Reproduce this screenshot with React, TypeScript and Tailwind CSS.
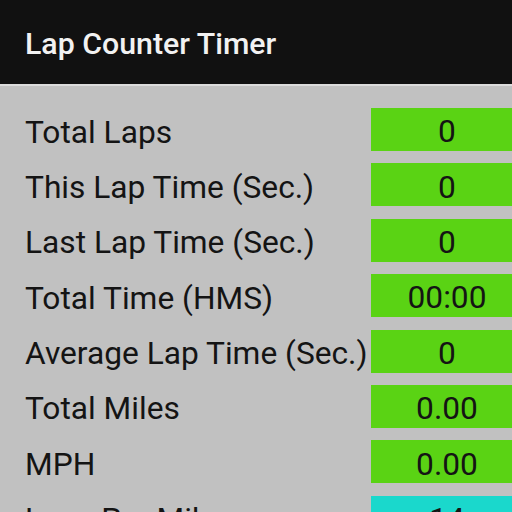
import React from "react";

const rows: { label: string; value: string; color: string }[] = [
  { label: "Total Laps", value: "0", color: "bg-[#5ad314]" },
  { label: "This Lap Time (Sec.)", value: "0", color: "bg-[#5ad314]" },
  { label: "Last Lap Time (Sec.)", value: "0", color: "bg-[#5ad314]" },
  { label: "Total Time (HMS)", value: "00:00", color: "bg-[#5ad314]" },
  { label: "Average Lap Time (Sec.)", value: "0", color: "bg-[#5ad314]" },
  { label: "Total Miles", value: "0.00", color: "bg-[#5ad314]" },
  { label: "MPH", value: "0.00", color: "bg-[#5ad314]" },
  { label: "Laps Per Mile", value: "14", color: "bg-[#1ad8cc]" },
];

export default function App() {
  return (
    <div
      className="w-[512px] h-[512px] overflow-hidden bg-[#c1c1c1] flex flex-col"
      style={{ fontFamily: "Roboto, 'Noto Sans', sans-serif" }}
    >
      <div className="h-[84px] shrink-0 bg-[#111111] flex items-center pl-[25px]">
        <span className="text-[30.3px] font-medium text-[#f2f2f2] mt-[3px]">
          Lap Counter Timer
        </span>
      </div>
      <div className="h-[2px] shrink-0 bg-[#dcdcdc]" />
      <div className="flex flex-col gap-[12.4px] pt-[22px] pl-[25px]">
        {rows.map((r) => (
          <div key={r.label} className="flex items-center h-[43px] shrink-0">
            <div className="w-[346px] shrink-0 text-[31.7px] text-[#141414] leading-[43px] pt-[5px] whitespace-nowrap">
              {r.label}
            </div>
            <div
              className={`w-[152px] shrink-0 h-[43px] ${r.color} text-[31.7px] text-[#141414] flex items-center justify-center pt-[5px]`}
            >
              {r.value}
            </div>
          </div>
        ))}
      </div>
    </div>
  );
}
